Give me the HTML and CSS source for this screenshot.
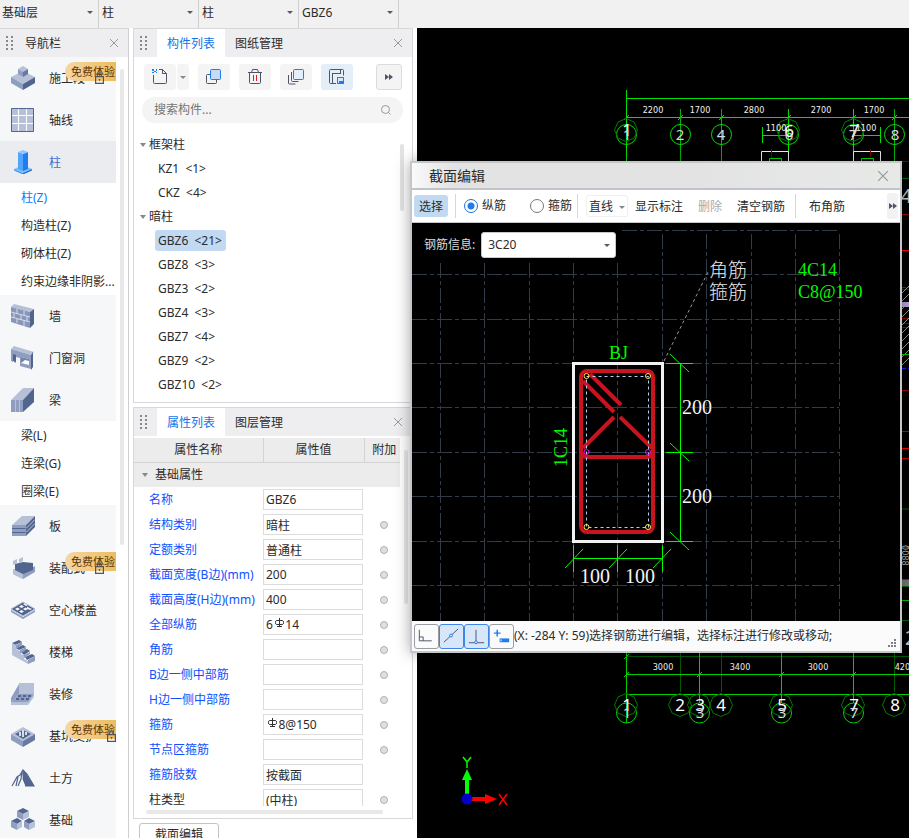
FILE: index.html
```html
<!DOCTYPE html>
<html lang="zh-CN">
<head>
  <meta charset="UTF-8">
  <meta name="viewport" content="width=device-width, initial-scale=1.0">
  <title>截面编辑</title>
  <link rel="stylesheet" href="styles.css">
</head>
<body>
  <!-- shared shapes -->
  <svg class="defs" width="0" height="0" aria-hidden="true">
    <symbol id="cross" viewBox="0 0 10 10"><path d="M1 1l8 8M9 1l-8 8" fill="none" stroke="currentColor"/></symbol>
    <symbol id="grip" viewBox="0 0 7 14"><path d="M0 0h2v2h-2zM5 0h2v2h-2zM0 4h2v2h-2zM5 4h2v2h-2zM0 8h2v2h-2zM5 8h2v2h-2zM0 12h2v2h-2zM5 12h2v2h-2z" fill="#86888c"/></symbol>
    <symbol id="lock" viewBox="0 0 9 12"><path d="M2.5 5V3a2 2 0 0 1 4 0V5M.6 4.6h7.8v6.8H.6z" fill="none" stroke="#4d5566" stroke-width="1.2"/><path d="M3.5 7h2l-1 2.600z" fill="#4d5566"/></symbol>
    <symbol id="more" viewBox="0 0 8 6"><path d="M0 0l4 3-4 3zM4 0l4 3-4 3z" fill="#4d5566"/></symbol>
    <symbol id="rebar" viewBox="0 0 9 10"><path d="M4.500 0v9M1.500 2.500h6q1 0 1 2t-1 2h-6q-1 0-1-2t1-2M2 8.500h5" fill="none" stroke="#333"/></symbol>
    <symbol id="octagon" viewBox="-12 -12 24 24"><path d="M0-11.500L8-8L11.500 0L8 8L0 11.500L-8 8L-11.500 0L-8-8z" fill="none" stroke="#007800"/></symbol>
  </svg>

  <div class="app">
    <header class="topbar">
      <div class="pick"><select aria-label="楼层"><option>基础层</option></select></div>
      <div class="pick"><select aria-label="构件大类"><option>柱</option></select></div>
      <div class="pick"><select aria-label="构件类型"><option>柱</option></select></div>
      <div class="pick"><select aria-label="构件"><option>GBZ6</option></select></div>
    </header>

    <div class="workspace">
      <nav class="nav">
        <div class="panel-head nav-head">
          <svg class="grip"><use href="#grip"/></svg>
          <span class="nav-title">导航栏</span>
          <button class="close" aria-label="关闭"><svg><use href="#cross"/></svg></button>
        </div>
        <div class="nav-body">
          <div class="nav-list">
            <button class="nav-item">
              <svg viewBox="0 0 24 24"><path d="M0 11l12-6 12 6-12 7z" fill="#b6c1d8"/><path d="M0 11l12 7v6L0 17z" fill="#8e9dc0"/><path d="M24 11l-12 7v6l12-7z" fill="#52658f"/><path d="M7 3l5-3 5 3-5 3z" fill="#b6c1d8"/><path d="M7 3l5 3v5L7 8z" fill="#8e9dc0"/><path d="M17 3l-5 3v5l5-3z" fill="#6679a2"/></svg>
              <span>施工段</span><svg class="lock"><use href="#lock"/></svg><b class="badge">免费体验</b>
            </button>
            <button class="nav-item">
              <svg viewBox="0 0 24 24"><path d="M0 0h23v24H0z" fill="#b6c1d8"/><path d="M7.500 1v22M15.500 1v22M1 7.500h21M1 15.500h21" stroke="#fff"/><path d="M.500.500h22v23H.500z" fill="none" stroke="#52658f"/></svg>
              <span>轴线</span>
            </button>
            <button class="nav-item active">
              <svg viewBox="0 0 24 24"><path d="M3 19l9-4 9 4-9 4z" fill="#7cc0ff"/><path d="M3 19l9 4v1.500L3 20.500z" fill="#4597ee"/><path d="M21 19l-9 4v1.500l9-4z" fill="#1b6bdb"/><path d="M7 2l5 2v17l-5-2z" fill="#53a4fb"/><path d="M17 2l-5 2v17l5-2z" fill="#1f7cf2"/><path d="M7 2l5-2 5 2-5 2z" fill="#8cc8ff"/></svg>
              <span>柱</span>
            </button>
            <a class="sub-item current" href="#">柱(Z)</a>
            <a class="sub-item" href="#">构造柱(Z)</a>
            <a class="sub-item" href="#">砌体柱(Z)</a>
            <a class="sub-item" href="#">约束边缘非阴影...</a>
            <button class="nav-item">
              <svg viewBox="0 0 24 24"><path d="M0 3l3-3 20 5-4 3z" fill="#b6c1d8"/><path d="M0 3l19 5v16L0 18z" fill="#8796b9"/><path d="M19 8l4-3v15l-4 4z" fill="#52658f"/><path d="M0 8l19 5M0 13l19 5M6 5v5M13 7v4M3 9v5M10 11v5M16 12v5M6 15v4M13 17v5" fill="none" stroke="#d5dcea"/></svg>
              <span>墙</span>
            </button>
            <button class="nav-item">
              <svg viewBox="0 0 24 24"><path d="M0 3l3-3 20 6-3 3z" fill="#b6c1d8"/><path d="M0 3l20 6v14L9 20v-8l-4-1v6l-2-1v-5l-1 5-2-1z" fill="#8e9dc0"/><path d="M20 9l2-3v15l-2 3z" fill="#52658f"/><path d="M2 8l3 1v7l-3-1z" fill="#52658f"/><path d="M10 11l8 2v6l-8-2z" fill="#fff"/><path d="M10 11v6l4-3 4 1v-2z" fill="#7384aa"/></svg>
              <span>门窗洞</span>
            </button>
            <button class="nav-item">
              <svg viewBox="0 0 24 24"><path d="M0 12L12 0h11L12 12z" fill="#b6c1d8"/><path d="M0 12h12v12H0z" fill="#8e9dc0"/><path d="M12 12L23 0v14L12 24z" fill="#52658f"/><path d="M4.500 12v12M8.500 12v12" stroke="#b6c1d8"/></svg>
              <span>梁</span>
            </button>
            <a class="sub-item" href="#">梁(L)</a>
            <a class="sub-item" href="#">连梁(G)</a>
            <a class="sub-item" href="#">圈梁(E)</a>
            <button class="nav-item">
              <svg viewBox="0 0 24 24"><path d="M1 11L11 2h13l-9 9z" fill="#b6c1d8"/><path d="M15 11l9-9v11l-9 9z" fill="#52658f"/><path d="M1 11h14v11H1z" fill="#52658f"/><path d="M1 11h14v3H1zM1 15h14v3H1zM1 19h14v3H1z" fill="#8e9dc0"/><path d="M15 14.500l9-9M15 18.500l9-9" stroke="#b6c1d8"/></svg>
              <span>板</span>
            </button>
            <button class="nav-item">
              <svg viewBox="0 0 24 24"><path d="M2 13l10 4 12-7v6l-12 7-10-5z" fill="#8e9dc0"/><path d="M2 13l10 5v5L2 18z" fill="#b6c1d8"/><path d="M4 8l8-2 10 1v7l-10 4-8-4z" fill="#52658f"/><path d="M2 5l4-2v4l-4 2zM8 3l4-2v4L8 7z" fill="#b6c1d8"/></svg>
              <span>装配式</span><svg class="lock"><use href="#lock"/></svg><b class="badge">免费体验</b>
            </button>
            <button class="nav-item">
              <svg viewBox="0 0 24 24"><path d="M0 11l12-7 12 7-12 7z" fill="#52658f"/><path d="M0 12v2l12 7 12-7v-2l-12 7z" fill="#8e9dc0"/><path d="M4 11l2.500-1.500L9 11l-2.500 1.500zM8 8.500L10.500 7 13 8.500 10.500 10zM8 13.500l2.500-1.500 2.500 1.500-2.500 1.500zM12 11l2.500-1.500L17 11l-2.500 1.500zM16 8.500L18.500 10 21 11l-2 1-3-1.500zM12 6l2-1 3 2-2 1z" fill="#f5f7f9"/><path d="M0 11l12-7 12 7-12 7z" fill="none" stroke="#b6c1d8"/></svg>
              <span>空心楼盖</span>
            </button>
            <button class="nav-item">
              <svg viewBox="0 0 24 24"><path d="M1 3l7-3 3 2-7 3zM5 8l7-3 3 2-7 3zM10 12l6-3 3 2-6 4zM14 17l7-3 3 2-8 4z" fill="#52658f"/><path d="M1 3l4 2v4l4 2v3l4 1v4l4 2v3L1 15z" fill="#b6c1d8"/><path d="M5 5l6-3v3L5 9zM9 10l6-3v3l-6 4zM13 15l6-3v2l-6 4zM17 20l7-4v5l-7 3z" fill="#8e9dc0"/></svg>
              <span>楼梯</span>
            </button>
            <button class="nav-item">
              <svg viewBox="0 0 24 24"><path d="M0 16L8 2v10l-8 9z" fill="#8e9dc0"/><path d="M8 1h15v11H8z" fill="#b6c1d8"/><path d="M8 12h15l-6 9H0z" fill="#8e9dc0"/><path d="M0 20h17l6-8v3l-6 8H0z" fill="#b6c1d8"/><path d="M7 14h3M12 14h3M17 14h3M5 17h3M10 17h3M15 17h3" stroke="#52658f" stroke-width="2"/></svg>
              <span>装修</span>
            </button>
            <button class="nav-item">
              <svg viewBox="0 0 24 24"><path d="M0 10l12-7 12 7-12 7z" fill="#b6c1d8"/><path d="M0 10l12 7v6L0 16z" fill="#8e9dc0"/><path d="M24 10l-12 7v6l12-7z" fill="#6679a2"/><path d="M4 10l8-4 8 4-8 5z" fill="#52658f"/><path d="M9 12V8M12 13V6M15 11V8" stroke="#d5dcea" stroke-width="2"/></svg>
              <span>基坑支护</span><svg class="lock"><use href="#lock"/></svg><b class="badge">免费体验</b>
            </button>
            <button class="nav-item">
              <svg viewBox="0 0 24 24"><path d="M11 4l4 3 8 13h-8l-3-6z" fill="#52658f"/><path d="M1 20l5-9 3-2 3-5 4 4 7 12h-9M7 11l-2 9M11 5l-1 8-3 7M12 12l3 8" fill="none" stroke="#52658f" stroke-width="1.200"/></svg>
              <span>土方</span>
            </button>
            <button class="nav-item">
              <svg viewBox="0 0 24 24"><path d="M6 3l6-3 6 3-6 3zM0 13l6-3 5 3-5 3zM13 13l5-3 6 3-6 3z" fill="#52658f"/><path d="M6 3l6 3v6L6 9zM0 13l6 3v6l-6-3zM13 13l5 3v6l-5-3z" fill="#8e9dc0"/><path d="M18 3l-6 3v6l6-3zM11 13l-5 3v6l5-3zM24 13l-6 3v6l6-3z" fill="#b6c1d8"/></svg>
              <span>基础</span>
            </button>
          </div>
          <div class="nav-scroll"></div>
        </div>
      </nav>

      <aside class="side">
        <section class="panel">
          <div class="panel-head">
            <svg class="grip"><use href="#grip"/></svg>
            <button class="tab selected">构件列表</button>
            <button class="tab">图纸管理</button>
            <button class="close" aria-label="关闭"><svg><use href="#cross"/></svg></button>
          </div>
          <div class="tools">
            <div class="tool-group">
              <button class="tool" aria-label="新建"><svg viewBox="0 0 18 18"><path d="M2.500 7v7.500q0 1 1 1h11q1 0 1-1V5.500l-4-4H8M11.500 1.500v4h4" fill="none" stroke="#4d5566"/><path d="M1 1h2v2H1zM5 1h1v2H5zM3 3h2v1H3zM1 4h2v1H1zM5 4h1v1H5z" fill="#1f7cf2"/></svg></button>
              <button class="tool drop" aria-label="新建选项"></button>
            </div>
            <button class="tool" aria-label="复制"><svg viewBox="0 0 18 18"><rect x="1.500" y="6.500" width="10" height="9" rx="1" fill="none" stroke="#4d5566"/><rect x="5.500" y="1.500" width="10" height="10" rx="1" fill="#c6daf3" stroke="#1f7cf2"/></svg></button>
            <button class="tool" aria-label="删除"><svg viewBox="0 0 18 18"><path d="M2 4.500h14M5.500 4.500l1-3h5l1 3M3.500 4.500v10q0 1 1 1h9q1 0 1-1v-10" fill="none" stroke="#4d5566"/><path d="M7.500 7v6M10.500 7v6" stroke="#d9202a"/></svg></button>
            <button class="tool" aria-label="层间复制"><svg viewBox="0 0 18 18"><path d="M4.500 4v8.500q0 1 1 1h6M1.500 7v8q0 1 1 1h6" fill="none" stroke="#4d5566"/><rect x="6.500" y="1.500" width="10" height="10" rx="1" fill="#e3effd" stroke="#1f7cf2"/></svg></button>
            <button class="tool on" aria-label="存档"><svg viewBox="0 0 18 18"><path d="M8 15.500H2.500q-1 0-1-1v-12q0-1 1-1h12q1 0 1 1v5M4.500 15V5M12.500 2v4M4.500 5.500h8" fill="none" stroke="#4d5566"/><rect x="9.500" y="9.500" width="6" height="6" fill="#d7e7fb" stroke="#1f7cf2"/><path d="M11 13h4v3h-4z" fill="#1f7cf2"/></svg></button>
            <button class="tool more" aria-label="更多"><svg><use href="#more"/></svg></button>
          </div>
          <label class="search">
            <input type="text" placeholder="搜索构件..." aria-label="搜索构件">
            <svg viewBox="0 0 12 12"><circle cx="5.500" cy="5.500" r="4" fill="none" stroke="#999"/><path d="M8.500 8.500l2 2" stroke="#999"/></svg>
          </label>
          <div class="tree-wrap">
            <ul class="tree">
              <li><span class="branch">框架柱</span>
                <ul>
                  <li><span>KZ1  &lt;1&gt;</span></li>
                  <li><span>CKZ  &lt;4&gt;</span></li>
                </ul>
              </li>
              <li><span class="branch">暗柱</span>
                <ul>
                  <li><span class="picked">GBZ6  &lt;21&gt;</span></li>
                  <li><span>GBZ8  &lt;3&gt;</span></li>
                  <li><span>GBZ3  &lt;2&gt;</span></li>
                  <li><span>GBZ4  &lt;3&gt;</span></li>
                  <li><span>GBZ7  &lt;4&gt;</span></li>
                  <li><span>GBZ9  &lt;2&gt;</span></li>
                  <li><span>GBZ10  &lt;2&gt;</span></li>
                </ul>
              </li>
            </ul>
            <div class="tree-scroll"></div>
          </div>
        </section>

        <section class="panel props">
          <div class="panel-head">
            <svg class="grip"><use href="#grip"/></svg>
            <button class="tab selected">属性列表</button>
            <button class="tab">图层管理</button>
            <button class="close" aria-label="关闭"><svg><use href="#cross"/></svg></button>
          </div>
          <div class="props-body">
            <div class="props-clip">
              <table class="prop-table">
                <thead><tr><th class="col-name">属性名称</th><th class="col-value">属性值</th><th class="col-extra">附加</th></tr></thead>
                <tbody>
                  <tr class="category"><td colspan="3"><span class="branch">基础属性</span></td></tr>
                  <tr><td><label for="p1">名称</label></td><td><input type="text" id="p1" value="GBZ6"></td><td></td></tr>
                  <tr><td><label for="p2">结构类别</label></td><td><input type="text" id="p2" value="暗柱"></td><td><input type="radio" aria-label="附加"></td></tr>
                  <tr><td><label for="p3">定额类别</label></td><td><input type="text" id="p3" value="普通柱"></td><td><input type="radio" aria-label="附加"></td></tr>
                  <tr><td><label for="p4">截面宽度(B边)(mm)</label></td><td><input type="text" id="p4" value="200"></td><td><input type="radio" aria-label="附加"></td></tr>
                  <tr><td><label for="p5">截面高度(H边)(mm)</label></td><td><input type="text" id="p5" value="400"></td><td><input type="radio" aria-label="附加"></td></tr>
                  <tr><td><label for="p6">全部纵筋</label></td><td class="has-rebar after-digit"><input type="text" id="p6" value="6    14"><svg><use href="#rebar"/></svg></td><td><input type="radio" aria-label="附加"></td></tr>
                  <tr><td><label for="p7">角筋</label></td><td><input type="text" id="p7"></td><td><input type="radio" aria-label="附加"></td></tr>
                  <tr><td><label for="p8">B边一侧中部筋</label></td><td><input type="text" id="p8"></td><td><input type="radio" aria-label="附加"></td></tr>
                  <tr><td><label for="p9">H边一侧中部筋</label></td><td><input type="text" id="p9"></td><td><input type="radio" aria-label="附加"></td></tr>
                  <tr><td><label for="p10">箍筋</label></td><td class="has-rebar"><input type="text" id="p10" value="    8@150"><svg><use href="#rebar"/></svg></td><td><input type="radio" aria-label="附加"></td></tr>
                  <tr><td><label for="p11">节点区箍筋</label></td><td><input type="text" id="p11"></td><td><input type="radio" aria-label="附加"></td></tr>
                  <tr><td><label for="p12">箍筋肢数</label></td><td><input type="text" id="p12" value="按截面"></td><td></td></tr>
                  <tr><td><label class="plain" for="p13">柱类型</label></td><td><input type="text" id="p13" value="(中柱)"></td><td><input type="radio" aria-label="附加"></td></tr>
                </tbody>
              </table>
            </div>
            <div class="props-scroll"></div>
          </div>
          <div class="props-hscroll"></div>
        </section>
        <div class="side-foot"><button class="section-btn">截面编辑</button></div>
      </aside>

      <main class="drawing">
        <svg class="plan">
          <g transform="translate(-417 -28)">
            <!-- upper axis dimensions -->
            <g fill="none" stroke="#00e000">
              <path d="M626 98.500H2000M626 117.500H2000M624 120l5-5M678 120l5-5M719 120l5-5M786 120l5-5M851 120l5-5M892 120l5-5"/>
              <path d="M626.500 90V162M788.500 109V162M853.500 109V162"/>
              <path d="M680.500 109V162M721.500 109V162M894.500 109V162" stroke="#00b400"/>
              <path d="M762 135.500H788M762.500 127V143M853 135.500H881M880.500 127V143"/>
              <circle cx="626.500" cy="134.500" r="10"/><circle cx="680.500" cy="134.500" r="10"/><circle cx="721.500" cy="134.500" r="10"/>
              <circle cx="788.500" cy="134.500" r="10"/><circle cx="853.500" cy="134.500" r="10"/><circle cx="894.500" cy="134.500" r="10"/>
              <path d="M769.500 162v-3.500h12v3.500M861.500 162v-3.500h12v3.500"/>
            </g>
            <use href="#octagon" x="614" y="118" width="24" height="24"/><use href="#octagon" x="776" y="118" width="24" height="24"/><use href="#octagon" x="841" y="118" width="24" height="24"/>
            <path d="M761.500 162v-10.500h27v10.500M853.500 162v-10.500h27v10.500" fill="none" stroke="#eee"/>
            <path d="M590 161.500H2000M771.500 149v9M870.500 149v9" stroke="#780000"/>
            <g class="dim"><text x="653" y="113">2200</text><text x="700" y="113">1700</text><text x="754" y="113">2800</text><text x="821" y="113">2700</text><text x="874" y="113">1700</text><text x="776" y="131">1100</text><text x="866" y="131">1100</text></g>
            <g class="axis-no"><text x="627" y="136">1</text><text x="789" y="137">6</text><text x="854" y="137">7</text></g>
            <g class="axis-no small"><text x="627" y="140">1</text><text x="680" y="140">2</text><text x="721" y="140">4</text><text x="789" y="140">6</text><text x="853" y="140">7</text><text x="895" y="140">8</text></g>

            <!-- right edge of the plan -->
            <path d="M901 250.500H2000M901 448.500H2000" stroke="#f00"/>
            <path d="M901 214.500H2000M901 289.500H2000M901 318.500H2000M901 323.500H2000M901 327.500H2000M901 390.500H2000" stroke="#960000"/>
            <path d="M901 431.500H2000M901 458.500H2000M901 547.500H2000" stroke="#c80000"/>
            <path d="M895 300l14-14M895 308l14-14M895 316l14-14M895 324l14-14M895 332l14-14M895 340l14-14M895 348l14-14M895 356l14-14M895 364l14-14M899 368l10-10" stroke="#999"/>
            <path d="M901 302h20v5h-20z" fill="#b9a0d6"/>
            <path d="M901 287.500h20M901 368.500h20" stroke="#22f" stroke-dasharray="5 2"/>
            <path d="M901 178.500H2000M901 509H2000M901 620.500H2000" stroke="#006400"/>
            <path d="M901 354.500H2000M901 600.500H2000" stroke="#00c800"/>
            <path d="M901 580h20v6h-20z" fill="#777"/><path d="M901 579.500h20M901 586.500h20" stroke="#007000"/>
            <g class="edge-no"><text x="901" y="203">400</text><text x="905" y="645">2</text></g>
            <text class="dim-v" transform="translate(902 545) rotate(90)">0088</text>

            <!-- lower axis dimensions -->
            <path d="M626 656.500H2000M680.500 650V692M721.500 650V692M894.500 650V692" stroke="#005a00"/>
            <g fill="none" stroke="#00d000">
              <path d="M626 674.500H2000M626 694.500H2000M626.500 650V723M699.500 650V703M781.500 650V703M853.500 650V703M624 677l5-5M697 677l5-5M779 677l5-5M851 677l5-5M624 659l5-5"/>
              <circle cx="626.500" cy="713" r="10"/><circle cx="699.500" cy="713" r="10"/><circle cx="781.500" cy="713" r="10"/><circle cx="853.500" cy="713" r="10"/>
            </g>
            <use href="#octagon" x="614" y="693" width="24" height="24"/><use href="#octagon" x="668" y="693" width="24" height="24"/><use href="#octagon" x="687" y="693" width="24" height="24"/><use href="#octagon" x="709" y="693" width="24" height="24"/><use href="#octagon" x="769" y="693" width="24" height="24"/><use href="#octagon" x="841" y="693" width="24" height="24"/><use href="#octagon" x="882" y="693" width="24" height="24"/>
            <g class="dim"><text x="663" y="670">3000</text><text x="740" y="670">3400</text><text x="818" y="670">3000</text><text x="905" y="670">4200</text></g>
            <g class="axis-no"><text x="627" y="711">1</text><text x="680" y="711">2</text><text x="700" y="711">3</text><text x="721" y="711">4</text><text x="782" y="711">5</text><text x="854" y="711">7</text><text x="895" y="711">8</text></g>
            <g class="axis-no small"><text x="627" y="718">1</text><text x="700" y="718">3</text><text x="782" y="718">3</text><text x="854" y="718">7</text></g>

            <!-- coordinate axes -->
            <path d="M465 799V780h-3l5-11 5 11h-3v19z" fill="#0f0"/>
            <path d="M467 797h18v-3l12 5-12 5v-3h-18z" fill="#f00"/>
            <circle cx="467" cy="799" r="5.500" fill="#0000c8"/>
            <path d="M463 757l4 5 4-5M467 762v6" fill="none" stroke="#0f0" stroke-width="1.500"/>
            <path d="M499 794l8 11M507 794l-8 11" stroke="#f00" stroke-width="1.500"/>
          </g>
        </svg>
      </main>
    </div>

    <div class="dialog" role="dialog" aria-label="截面编辑">
      <div class="dialog-title">
        <span>截面编辑</span>
        <button class="close" aria-label="关闭"><svg><use href="#cross"/></svg></button>
      </div>
      <div class="dialog-tools">
        <button class="text-btn on">选择</button>
        <i class="sep"></i>
        <label class="radio"><input type="radio" name="bar" checked>纵筋</label>
        <label class="radio"><input type="radio" name="bar">箍筋</label>
        <i class="sep"></i>
        <button class="text-btn line-btn">直线</button>
        <button class="text-btn">显示标注</button>
        <button class="text-btn" disabled>删除</button>
        <button class="text-btn">清空钢筋</button>
        <i class="sep"></i>
        <button class="text-btn">布角筋</button>
        <button class="more-btn" aria-label="更多"><svg><use href="#more"/></svg></button>
      </div>
      <div class="dialog-canvas">
        <svg class="section">
          <g transform="translate(-412 -223)">
            <g class="grid">
              <path d="M440.500 263V621M484.500 263V621M529.500 263V621M573.500 263V621M617.500 263V621M662.500 234V621M706.500 234V621M751.500 234V621M795.500 234V621M839.500 234V621"/>
              <path d="M622 230.500H839M412 274.500H839M412 319.500H839M412 363.500H839M412 407.500H839M412 452.500H839M412 496.500H839M412 541.500H839M412 585.500H839"/>
            </g>
            <path d="M664 361l45-91" stroke="#999" stroke-dasharray="3 3"/>
            <rect x="573.500" y="363.500" width="89" height="178" fill="none" stroke="#f2f2f2" stroke-width="3"/>
            <g fill="none" stroke="#c8141e" stroke-width="4">
              <rect x="581" y="371" width="72" height="161" rx="6"/>
              <path d="M583 381l31 31M590 374l31 31M614 417l-31 31M620 417l32 31M581 449q0 8 6 8h60q6 0 6-8"/>
            </g>
            <rect x="586.500" y="376.500" width="62" height="151" fill="none" stroke="#b4cdf0" stroke-dasharray="3 3"/>
            <g fill="none" stroke="#ffe650"><circle cx="586.500" cy="376" r="2.500"/><circle cx="648" cy="376" r="2.500"/><circle cx="586.500" cy="527" r="2.500"/><circle cx="648" cy="527" r="2.500"/></g>
            <g fill="none" stroke="#e614e6"><circle cx="586.500" cy="452" r="2.500"/><circle cx="648" cy="452" r="2.500"/></g>
            <path d="M680.500 363V542M666 363.500h27M666 452.500h27M666 541.500h27M670 354l19 18M670 443l19 18M670 532l19 18M573 558.500h90M573.500 545v27M617.500 545v27M662.500 545v27M565 568l18-19M609 568l18-19M653 568l18-19" fill="none" stroke="#00fa00"/>
            <g class="measure"><text x="682" y="414">200</text><text x="682" y="503">200</text><text x="580" y="583">100</text><text x="625" y="583">100</text></g>
            <g class="notes"><text x="709" y="277">角筋</text><text x="709" y="299">箍筋</text></g>
            <g class="bars"><text x="609" y="359">BJ</text><text x="798" y="276">4C14</text><text x="798" y="298">C8@150</text><text transform="translate(567 467) rotate(-90)">1C14</text></g>
          </g>
        </svg>
        <div class="rebar-info">
          <label for="rebarInfo">钢筋信息:</label>
          <div class="rebar-select"><select id="rebarInfo"><option>3C20</option></select></div>
        </div>
      </div>
      <div class="dialog-status">
        <button class="snap" aria-label="正交"><svg viewBox="0 0 24 24"><path d="M4.500 5v11.500h13M4.500 12.500h4v4" fill="none" stroke="#4d5566"/></svg></button>
        <button class="snap on" aria-label="线上点"><svg viewBox="0 0 24 24"><path d="M4 18L19 4" stroke="#4d5566"/><circle cx="11.500" cy="11" r="1.500" fill="#d8e6fa" stroke="#1f7cf2"/></svg></button>
        <button class="snap on" aria-label="垂足"><svg viewBox="0 0 24 24"><path d="M4 18.500h16M11.500 5v12" stroke="#4d5566"/><circle cx="11.500" cy="18" r="1.500" fill="#d8e6fa" stroke="#1f7cf2"/></svg></button>
        <button class="snap" aria-label="动态输入"><svg viewBox="0 0 24 24"><path d="M7.500 5v7M4 8.500h7" stroke="#1f7cf2" stroke-width="1.500"/><path d="M10 14h10v4H10z" fill="#1f7cf2"/><path d="M11.500 15v2" stroke="#fff"/></svg></button>
        <span>(X: -284 Y: 59)选择钢筋进行编辑，选择标注进行修改或移动;</span>
        <svg class="resize" viewBox="0 0 8 8"><path d="M6 0h2v2h-2zM3 3h2v2h-2zM6 3h2v2h-2zM0 6h2v2h-2zM3 6h2v2h-2zM6 6h2v2h-2z" fill="#7a7f88"/></svg>
      </div>
    </div>
  </div>
</body>
</html>
```
FILE: styles.css
```css
:root {
  --line: #d8d8da;
  --head: #eeeef1;
  --text: #2b2b2b;
  --blue: #1473e6;
  --prop-blue: #0f50ff;
}

* {
  box-sizing: border-box;
}

body {
  margin: 0;
  font: 12px/20px "Noto Sans", "Noto Sans CJK SC", sans-serif;
  color: var(--text);
  background: #fff;
}

button, input, select {
  font: inherit;
  color: inherit;
  margin: 0;
  padding: 0;
  border: 0;
  background: none;
  border-radius: 0;
}

select {
  appearance: none;
  width: 100%;
  height: 100%;
}

.defs {
  position: absolute;
}

.app {
  position: relative;
  display: flex;
  flex-direction: column;
  height: 100vh;
  overflow: hidden;
}

/* top bar */
.topbar {
  display: flex;
  height: 28px;
  background: #f1f1f1;
}

.pick, .rebar-select {
  position: relative;
}

.pick {
  width: 100px;
  padding: 0 0 2px 3px;
  border-right: 1px solid #d0d0d0;
}

.pick:first-child {
  width: 99px;
  padding-left: 2px;
}

.pick::after, .rebar-select::after, .drop::after, .line-btn::after {
  content: "";
  border: 3px solid transparent;
  border-top: 3px solid #555a66;
  border-bottom: 0;
}

.pick::after {
  position: absolute;
  right: 5px;
  top: 11px;
  pointer-events: none;
}

.workspace {
  display: flex;
  flex: 1;
  min-height: 0;
}

/* panel headers */
.panel-head {
  display: flex;
  align-items: center;
  height: 28px;
  background: var(--head);
}

.grip {
  width: 7px;
  height: 14px;
  margin: 0 10px 0 6px;
}

.close {
  display: flex;
  margin-left: auto;
  color: #999;
}

.close svg {
  width: 10px;
  height: 10px;
}

.panel-head .close {
  padding-right: 9px;
}

.tab, .nav-title {
  padding-top: 2px;
}

.tab {
  width: 68px;
  height: 28px;
}

.tab.selected {
  background: #fff;
  color: var(--blue);
}

/* navigation */
.nav {
  display: flex;
  flex-direction: column;
  width: 129px;
  border-right: 1px solid #cfcfd2;
  border-top: 1px solid var(--line);
}

.nav-head {
  flex: none;
}

.nav-head .grip {
  margin-right: 12px;
}

.nav-body {
  display: flex;
  flex: 1;
  min-height: 0;
  overflow: hidden;
}

.nav-list {
  width: 116px;
}

.nav-item {
  position: relative;
  display: flex;
  align-items: center;
  width: 100%;
  height: 42px;
  padding-left: 11px;
  background: #f5f7f9;
}

.nav-item svg {
  flex: none;
  width: 24px;
  height: 24px;
  margin-right: 14px;
}

.nav-item span {
  padding-top: 2px;
  white-space: nowrap;
}

.nav-item.active {
  background: #ebecf0;
  color: #3b6fd4;
}

.nav-item .lock {
  z-index: 1;
  width: 9px;
  height: 12px;
  margin: 0 0 0 10px;
}

.badge {
  position: absolute;
  top: 5px;
  right: 0;
  width: 51px;
  padding-left: 6px;
  border-radius: 10px 0 0 10px;
  background: linear-gradient(90deg, #f5d6a6, #ecbc5e);
  color: #5c3405;
  font-size: 11px;
  font-weight: normal;
  line-height: 19px;
  text-align: left;
  white-space: nowrap;
}

.sub-item {
  display: block;
  height: 28px;
  padding-left: 21px;
  line-height: 30px;
  color: inherit;
  text-decoration: none;
  white-space: nowrap;
}

.sub-item.current {
  color: #0a7cff;
}

.nav-scroll {
  width: 4px;
  height: 476px;
  margin: 12px 0 0 4px;
  border-radius: 2px;
  background: #e8e8e9;
}

/* side panels */
.side {
  display: flex;
  flex-direction: column;
  gap: 4px;
  width: 280px;
  margin: 0 4px;
}

.panel {
  border: 1px solid var(--line);
}

.tools {
  display: flex;
  gap: 9px;
  padding: 7px 10px;
}

.tool-group {
  display: flex;
  gap: 1px;
}

.tool {
  display: flex;
  align-items: center;
  justify-content: center;
  width: 32px;
  height: 26px;
  border-radius: 3px;
  background: #f4f4f4;
}

.tool svg {
  width: 18px;
  height: 18px;
}

.tool.drop {
  width: 12px;
}

.drop::after, .line-btn::after {
  border-top-color: #888;
}

.tool.on {
  background: #e4eef9;
}

.tool.more {
  width: 26px;
  margin-left: auto;
  border: 1px solid #dcdcde;
}

.tool.more svg, .more-btn svg {
  width: 8px;
  height: 6px;
}

.search {
  display: flex;
  align-items: center;
  height: 26px;
  margin: 0 9px 0 8px;
  padding: 0 11px 0 12px;
  border-radius: 13px;
  background: #f4f4f4;
}

.search input {
  flex: 1;
  min-width: 0;
  outline: 0;
}

.search input::placeholder {
  color: #757575;
}

.search svg {
  width: 12px;
  height: 12px;
}

.tree-wrap {
  display: flex;
  justify-content: space-between;
  padding: 10px 8px 5px 6px;
}

.tree, .tree ul {
  margin: 0;
  padding: 0;
  list-style: none;
  line-height: 24px;
}

.tree ul {
  padding-left: 15px;
}

.tree ul li {
  display: flex;
  align-items: flex-start;
  height: 24px;
  padding-top: 1px;
}

.tree ul span {
  padding: 0 4px 0 3px;
  border-radius: 3px;
  line-height: 21px;
  white-space: pre;
}

.tree .picked {
  background: #c1d9f1;
}

.branch::before {
  content: "";
  display: inline-block;
  margin-right: 3px;
  vertical-align: 2px;
  border: 3px solid transparent;
  border-top: 4px solid #888;
  border-bottom: 0;
}

.tree-scroll {
  width: 4px;
  height: 67px;
  margin-top: 11px;
  border-radius: 2px;
  background: #e3e3e3;
}

/* properties */
.props {
  display: flex;
  flex: 1;
  flex-direction: column;
  min-height: 0;
}

.props .panel-head {
  flex: none;
}

.props-body {
  display: flex;
  flex: 1;
  gap: 4px;
  min-height: 0;
  padding-top: 2px;
}

.props-clip {
  width: 266px;
  overflow: hidden;
}

.prop-table {
  width: 100%;
  border-collapse: collapse;
  table-layout: fixed;
}

.prop-table th {
  height: 24px;
  padding: 0;
  border-right: 1px solid #d4d4d4;
  border-bottom: 1px solid #d4d4d4;
  background: #ececec;
  font-weight: normal;
}

.prop-table .col-name {
  width: 129px;
}

.prop-table .col-value {
  width: 101px;
}

.prop-table .col-extra {
  padding-left: 4px;
  border-right: 0;
}

.prop-table td {
  height: 25px;
  padding: 0;
}

.prop-table td:first-child {
  padding-left: 15px;
  color: var(--prop-blue);
  white-space: nowrap;
}

.prop-table td:nth-child(3) {
  padding-left: 4px;
}

.prop-table .plain {
  color: var(--text);
}

.prop-table .category td {
  padding-left: 8px;
  background: #ececec;
  color: var(--text);
}

.category .branch::before {
  margin-right: 7px;
}

.prop-table input[type="text"] {
  display: block;
  width: 100px;
  height: 21px;
  padding-left: 2px;
  border: 1px solid #dcdcdc;
}

.prop-table input[type="radio"] {
  appearance: none;
  display: block;
  width: 8px;
  height: 8px;
  margin: 0 auto;
  border: 1px solid #aeb0b4;
  border-radius: 50%;
  background: #dfdfe2;
}

.has-rebar {
  position: relative;
}

.has-rebar svg {
  position: absolute;
  left: 5px;
  top: 6px;
  width: 9px;
  height: 10px;
}

.has-rebar.after-digit svg {
  left: 12px;
}

.props-scroll {
  width: 4px;
  height: 154px;
  margin-top: 12px;
  border-radius: 2px;
  background: #e8e8e8;
}

.props-hscroll {
  flex: none;
  width: 237px;
  height: 4px;
  margin: 4px 0 4px 12px;
  border-radius: 2px;
  background: #e8e8e8;
}

.side-foot {
  height: 15px;
  padding-left: 6px;
  overflow: hidden;
}

.section-btn {
  width: 80px;
  height: 24px;
  border: 1px solid #c4c4c8;
  border-radius: 3px;
}

/* model view */
.drawing {
  flex: 1;
  min-width: 0;
  background: #000;
}

.plan, .section {
  display: block;
  width: 100%;
  height: 100%;
}

.dim, .dim-v {
  fill: #f0f0f0;
  font: 9px "DejaVu Sans Condensed", "Liberation Sans", sans-serif;
  text-anchor: middle;
}

.dim-v {
  fill: #bbb;
  text-anchor: start;
}

.axis-no {
  fill: #fff;
  font-size: 17px;
  text-anchor: middle;
}

.axis-no.small {
  fill: #d8d8d8;
  font-size: 15px;
}

.edge-no {
  fill: #ccc;
  font-size: 19px;
}

/* section editor window */
.dialog {
  position: absolute;
  left: 410px;
  top: 161px;
  width: 492px;
  border: 2px solid #c4c6ca;
  background: #fff;
  box-shadow: 0 0 14px rgba(0, 0, 0, 0.35);
}

.dialog-title {
  display: flex;
  align-items: center;
  height: 27px;
  padding: 0 11px 0 17px;
  border-bottom: 2px solid #c0c3ca;
  background: linear-gradient(90deg, #fafafa, #e3e3e4 40px, #e3e3e4 60%, #e7e9e7);
  font-size: 14px;
}

.dialog-title .close svg {
  width: 12px;
  height: 12px;
}

.dialog-tools {
  display: flex;
  align-items: center;
  height: 33px;
  padding: 0 2px;
  border-bottom: 1px solid #c8c8cc;
  white-space: nowrap;
}

.text-btn {
  height: 22px;
  margin-right: 5px;
  padding: 2px 5px 0;
}

.text-btn.on {
  margin-right: 7px;
  border-radius: 3px;
  background: #c1d9f1;
}

.text-btn:disabled {
  color: #aaa;
}

.sep {
  width: 1px;
  height: 24px;
  margin-right: 8px;
  background: #d8d8da;
}

.radio {
  display: flex;
  align-items: center;
  gap: 4px;
  margin-right: 24px;
}

.radio + .sep {
  margin-left: -19px;
}

.radio input {
  appearance: none;
  width: 14px;
  height: 14px;
  border: 1px solid #777;
  border-radius: 50%;
}

.radio input:checked {
  border-color: #1f6fe0;
  background: radial-gradient(#1f7ce8 3px, #fff 4px);
}

.line-btn {
  display: flex;
  align-items: center;
  gap: 6px;
  margin-right: 2px;
  padding: 2px 3px 0;
  border-radius: 3px;
  box-shadow: inset 0 0 0 1px #f0f0f0;
}

.more-btn {
  display: flex;
  align-items: center;
  justify-content: center;
  width: 11px;
  height: 26px;
  margin-left: auto;
  border-radius: 3px;
  background: #f2f2f2;
}

.dialog-canvas {
  position: relative;
  height: 398px;
  background: #000;
}

.grid {
  fill: none;
  stroke: #333a48;
  stroke-dasharray: 15 3 4 3;
}

.measure {
  fill: #f4f4f4;
  font: 20px "Liberation Serif", serif;
}

.notes {
  fill: #e8e8e8;
  font: 300 19px "Noto Sans CJK SC", sans-serif;
}

.bars {
  fill: #00fa00;
  font: 18px "Liberation Serif", serif;
}

.rebar-info {
  position: absolute;
  left: 12px;
  top: 9px;
  display: flex;
  align-items: center;
  gap: 6px;
  color: #dcdcdc;
}

.rebar-select {
  width: 135px;
  height: 26px;
  border: 1px solid #c8c8c8;
  border-radius: 3px;
  background: #fff;
  color: var(--text);
}

.rebar-select select {
  padding-left: 6px;
}

.rebar-select::after {
  position: absolute;
  right: 5px;
  top: 11px;
  pointer-events: none;
}

.dialog-status {
  display: flex;
  align-items: center;
  height: 30px;
  padding: 0 2px;
  background: #fbfbfb;
  white-space: nowrap;
}

.snap {
  display: flex;
  width: 25px;
  height: 25px;
  border: 1px solid #999ca2;
  border-radius: 3px;
}

.snap.on {
  border-color: #3b86e8;
  background: #d8e6fa;
}

.snap svg {
  width: 23px;
  height: 23px;
}

.resize {
  align-self: flex-end;
  width: 8px;
  height: 8px;
  margin: 0 2px 4px auto;
}
```
